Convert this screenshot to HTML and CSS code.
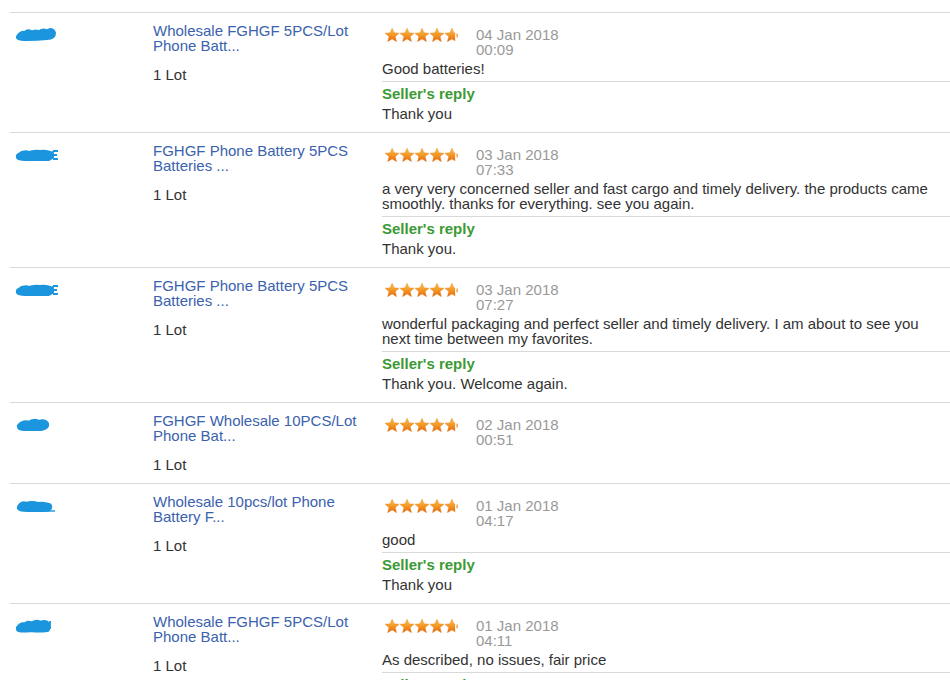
FILE: index.html
```html
<!DOCTYPE html>
<html>
<head>
<meta charset="utf-8">
<link rel="stylesheet" href="styles.css">
</head>
<body>
<svg width="0" height="0" class="defs" aria-hidden="true">
  <defs>
    <linearGradient id="sg" x1="0" y1="0" x2="0" y2="1">
      <stop offset="0" stop-color="#fcc24a"/>
      <stop offset="0.55" stop-color="#f39422"/>
      <stop offset="1" stop-color="#e4640e"/>
    </linearGradient>
    <symbol id="star" viewBox="0 0 16 15">
      <polygon points="8,0.3 10.1,5.2 15.6,5.6 11.4,9.2 12.8,14.6 8,11.7 3.2,14.6 4.6,9.2 0.4,5.6 5.9,5.2" fill="url(#sg)" stroke="#e58a2a" stroke-width="0.5" stroke-linejoin="round"/>
    </symbol>
    <clipPath id="half"><rect x="64" y="0" width="11.5" height="15"/></clipPath>
    <symbol id="rating" viewBox="0 0 80 15">
      <use href="#star" x="0" y="0" width="16" height="15"/>
      <use href="#star" x="16" y="0" width="16" height="15"/>
      <use href="#star" x="32" y="0" width="16" height="15"/>
      <use href="#star" x="48" y="0" width="16" height="15"/>
      <g clip-path="url(#half)"><use href="#star" x="64" y="0" width="16" height="15"/></g>
      <rect x="77" y="6" width="1.2" height="4" fill="#e8801c"/>
    </symbol>
  </defs>
</svg>

<div class="reviews">

  <div class="review">
    <div class="buyer">
      <svg class="scribble" width="46" height="16" viewBox="0 0 46 16"><path d="M4 10 Q7 5 10 8 Q13 3 17 7 Q21 4 24 7 Q28 3 32 6 Q36 2 38 6 Q38 10 32 10 Q22 11 12 11 Q6 11 4 10" fill="#1b95dd" stroke="#1b95dd" stroke-width="6" stroke-linecap="round" stroke-linejoin="round"/></svg>
    </div>
    <div class="product">
      <a class="title">Wholesale FGHGF 5PCS/Lot Phone Batt...</a>
      <div class="qty">1 Lot</div>
    </div>
    <div class="feedback">
      <div class="meta">
        <svg class="stars" width="80" height="14"><use href="#rating" width="80" height="14"/></svg>
        <div class="date">04 Jan 2018<br>00:09</div>
      </div>
      <div class="text">Good batteries!</div>
      <div class="reply">
        <div class="reply-label">Seller's reply</div>
        <div class="reply-text">Thank you</div>
      </div>
    </div>
  </div>

  <div class="review">
    <div class="buyer">
      <svg class="scribble" width="46" height="16" viewBox="0 0 46 16"><path d="M4 9 Q9 5 14 7 Q19 5 25 6 Q31 5 35 7 Q37 10 33 11 Q24 11 14 11 Q6 11 4 10" fill="#1b95dd" stroke="#1b95dd" stroke-width="6" stroke-linecap="round" stroke-linejoin="round"/><path d="M38 4 L38 12 M38 4 L43 4 M38 8 L42 8 M38 12 L43 12" stroke="#1b95dd" stroke-width="1.8" fill="none"/></svg>
    </div>
    <div class="product">
      <a class="title">FGHGF Phone Battery 5PCS Batteries ...</a>
      <div class="qty">1 Lot</div>
    </div>
    <div class="feedback">
      <div class="meta">
        <svg class="stars" width="80" height="14"><use href="#rating" width="80" height="14"/></svg>
        <div class="date">03 Jan 2018<br>07:33</div>
      </div>
      <div class="text">a very very concerned seller and fast cargo and timely delivery. the products came smoothly. thanks for everything. see you again.</div>
      <div class="reply">
        <div class="reply-label">Seller's reply</div>
        <div class="reply-text">Thank you.</div>
      </div>
    </div>
  </div>

  <div class="review">
    <div class="buyer">
      <svg class="scribble" width="46" height="16" viewBox="0 0 46 16"><path d="M4 9 Q9 5 14 7 Q19 5 25 6 Q31 5 35 7 Q37 10 33 11 Q24 11 14 11 Q6 11 4 10" fill="#1b95dd" stroke="#1b95dd" stroke-width="6" stroke-linecap="round" stroke-linejoin="round"/><path d="M38 4 L38 12 M38 4 L43 4 M38 8 L42 8 M38 12 L43 12" stroke="#1b95dd" stroke-width="1.8" fill="none"/></svg>
    </div>
    <div class="product">
      <a class="title">FGHGF Phone Battery 5PCS Batteries ...</a>
      <div class="qty">1 Lot</div>
    </div>
    <div class="feedback">
      <div class="meta">
        <svg class="stars" width="80" height="14"><use href="#rating" width="80" height="14"/></svg>
        <div class="date">03 Jan 2018<br>07:27</div>
      </div>
      <div class="text">wonderful packaging and perfect seller and timely delivery. I am about to see you next time between my favorites.</div>
      <div class="reply">
        <div class="reply-label">Seller's reply</div>
        <div class="reply-text">Thank you. Welcome again.</div>
      </div>
    </div>
  </div>

  <div class="review">
    <div class="buyer">
      <svg class="scribble" width="46" height="16" viewBox="0 0 46 16"><path d="M5 9 Q9 5 14 7 Q19 3 24 6 Q29 4 31 7 Q32 10 26 11 Q17 11 10 11 Q5 11 5 10" fill="#1b95dd" stroke="#1b95dd" stroke-width="6" stroke-linecap="round" stroke-linejoin="round"/></svg>
    </div>
    <div class="product">
      <a class="title">FGHGF Wholesale 10PCS/Lot Phone Bat...</a>
      <div class="qty">1 Lot</div>
    </div>
    <div class="feedback">
      <div class="meta">
        <svg class="stars" width="80" height="14"><use href="#rating" width="80" height="14"/></svg>
        <div class="date">02 Jan 2018<br>00:51</div>
      </div>
    </div>
  </div>

  <div class="review">
    <div class="buyer">
      <svg class="scribble" width="46" height="16" viewBox="0 0 46 16"><path d="M5 9 Q7 5 11 7 Q17 5 23 7 Q29 6 34 8 Q35 11 30 11 Q20 11 12 11 Q6 11 5 10" fill="#1b95dd" stroke="#1b95dd" stroke-width="6" stroke-linecap="round" stroke-linejoin="round"/><path d="M32 13 L40 13" stroke="#1b95dd" stroke-width="1.4"/></svg>
    </div>
    <div class="product">
      <a class="title">Wholesale 10pcs/lot Phone Battery F...</a>
      <div class="qty">1 Lot</div>
    </div>
    <div class="feedback">
      <div class="meta">
        <svg class="stars" width="80" height="14"><use href="#rating" width="80" height="14"/></svg>
        <div class="date">01 Jan 2018<br>04:17</div>
      </div>
      <div class="text">good</div>
      <div class="reply">
        <div class="reply-label">Seller's reply</div>
        <div class="reply-text">Thank you</div>
      </div>
    </div>
  </div>

  <div class="review">
    <div class="buyer">
      <svg class="scribble" width="46" height="16" viewBox="0 0 46 16"><path d="M4 10 Q7 6 10 8 Q13 4 17 7 Q21 3 26 6 Q30 4 32 6 L32 11 Q24 12 16 11 Q8 12 4 11" fill="#1b95dd" stroke="#1b95dd" stroke-width="6" stroke-linecap="round" stroke-linejoin="round"/><path d="M35 3 L35 11" stroke="#1b95dd" stroke-width="1.8"/></svg>
    </div>
    <div class="product">
      <a class="title">Wholesale FGHGF 5PCS/Lot Phone Batt...</a>
      <div class="qty">1 Lot</div>
    </div>
    <div class="feedback">
      <div class="meta">
        <svg class="stars" width="80" height="14"><use href="#rating" width="80" height="14"/></svg>
        <div class="date">01 Jan 2018<br>04:11</div>
      </div>
      <div class="text">As described, no issues, fair price</div>
      <div class="reply">
        <div class="reply-label">Seller's reply</div>
        <div class="reply-text">Thank you</div>
      </div>
    </div>
  </div>

</div>
</body>
</html>
```

FILE: styles.css
```css
html, body {
  margin: 0;
  padding: 0;
  background: #ffffff;
}

body {
  font-family: "Liberation Sans", Arial, sans-serif;
  font-size: 15px;
  color: #333333;
  overflow: hidden;
}

.defs {
  position: absolute;
  width: 0;
  height: 0;
}

.reviews {
  padding: 12px 0 0 10px;
}

.review {
  display: flex;
  border-top: 1px solid #d9d9d9;
}

.buyer {
  width: 136px;
  padding-left: 7px;
  padding-top: 14px;
  flex: none;
}

.scribble {
  display: block;
  margin-left: -2px;
}

.product {
  width: 214px;
  padding: 10px 15px 11px 0;
  flex: none;
  line-height: 15px;
}

.title {
  display: block;
  color: #3a62ad;
  text-decoration: none;
}

.qty {
  margin-top: 14px;
  color: #333333;
}

.feedback {
  flex: 1;
  padding-top: 14px;
  line-height: 15px;
}

.meta {
  display: flex;
  align-items: flex-start;
}

.stars {
  display: block;
  width: 80px;
  height: 14px;
  margin: 1px 14px 0 0;
  flex: none;
}

.date {
  color: #999999;
}

.text {
  margin-top: 4px;
  color: #333333;
}

.reply {
  margin-top: 5px;
  border-top: 1px solid #d9d9d9;
  padding: 2px 0 8px;
  line-height: 20px;
}

.reply-label {
  color: #3c9a34;
  font-weight: bold;
}

.reply-text {
  color: #333333;
}
```
